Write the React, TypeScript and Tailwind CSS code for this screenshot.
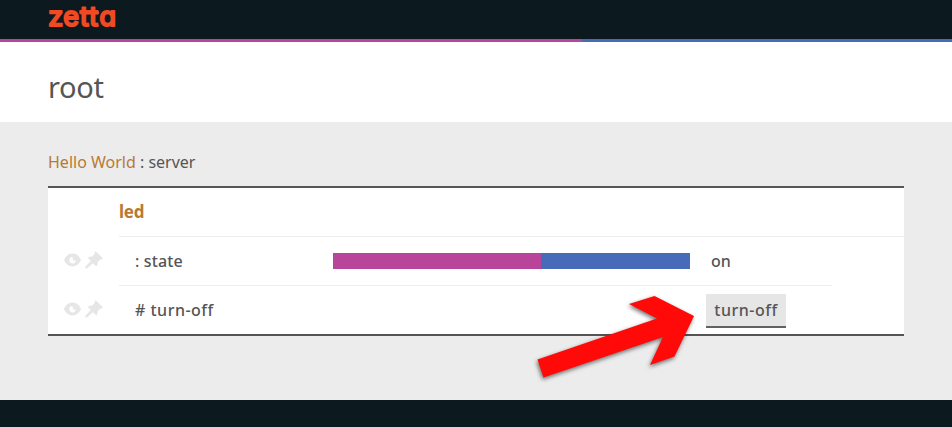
function Eye() {
  return (
    <svg className="block h-[14px] w-[17px]" viewBox="0 0 17 14">
      <path fill="#e6e6e6" fillRule="evenodd" d="M0 7C2 2.6 5 .6 8.500 .6S15 2.600 17 7c-2 4.400-5 6.400-8.500 6.400S2 11.400 0 7ZM8.300 4a3.200 3.200 0 1 0 3.400 3.200L9.400 7.800Z" />
    </svg>
  );
}

function Pin() {
  return (
    <svg className="block h-[18px] w-[18px]" viewBox="0 0 18 18">
      <path
        fill="#e6e6e6"
        stroke="#e6e6e6"
        strokeWidth="0.600"
        strokeLinejoin="round"
        d="M10.900 .8 17.300 7c.3 1.100-.8 1.500-2 1.200l-3 3c.3 1.600 0 2.900-1 3.800L7.900 11.900 2.400 16.800.7 17.200.8 15.700 6.100 10.100 3.100 6.900c1-.9 2.300-1.200 3.900-.9l3-3C9.700 1.800 9.800 .9 10.900 .8Z"
      />
    </svg>
  );
}

function Logo() {
  return (
    <svg className="block h-[39px] w-[80px]" viewBox="0 0 80 39" aria-label="zetta">
      <g fill="#f04923" stroke="#f04923" strokeWidth="2.200" strokeLinejoin="round">
        <text y="26.200" fontSize="27" fontWeight="400" className="font-['Inter',sans-serif] [font-feature-settings:'cv11']">
          <tspan x="0.300">z</tspan>
          <tspan x="15.200">e</tspan>
          <tspan x="32">t</tspan>
          <tspan x="41.300">t</tspan>
          <tspan x="51.400">a</tspan>
        </text>
        <rect x="34" y="12.300" width="16" height="1" />
      </g>
    </svg>
  );
}

function Icons() {
  return (
    <div className="flex w-[71px] shrink-0 gap-1 pl-4 pt-[14px]">
      <div className="pt-[2px]"><Eye /></div>
      <Pin />
    </div>
  );
}

export default function App() {
  return (
    <div className="flex h-[427px] w-[952px] flex-col overflow-hidden bg-[#ececec] font-['Noto_Sans','Open_Sans',sans-serif] text-base text-[#555]">
      <header className="h-[39px] shrink-0 bg-[#0c1a1f] pl-12"><Logo /></header>
      <div className="flex h-[3px] shrink-0">
        <div className="w-[582px] bg-[#b9459b]" />
        <div className="flex-1 bg-[#486bb9]" />
      </div>
      <div className="h-20 shrink-0 bg-white pl-12 pt-[25px]">
        <h1 className="text-[29px] leading-10 tracking-[-0.300px]">root</h1>
      </div>
      <main className="relative h-[278px] shrink-0 px-12 pt-7">
        <div className="h-9 leading-6"><span className="text-[#b87a33]">Hello World</span> : server</div>
        <section className="h-[150px] w-[856px] border-y-2 border-[#555] bg-white">
          <div className="ml-[71px] h-[49px] border-b border-[#eee] text-[17px] font-bold leading-[48px] tracking-[-0.200px] text-[#b87a33]">led</div>
          <div className="flex h-[49px] font-medium">
            <Icons />
            <div className="flex w-[713px] items-center border-b border-[#eee] pl-4">
              <div className="w-[198px] tracking-[0.150px]">: state</div>
              <div className="flex h-4 w-[357px]">
                <div className="w-[208px] bg-[#b9459b]" />
                <div className="flex-1 bg-[#486bb9]" />
              </div>
              <div className="pl-[21px]">on</div>
            </div>
          </div>
          <div className="flex h-12 font-medium">
            <Icons />
            <div className="flex flex-1 items-start pl-4">
              <div className="w-[571px] leading-[48px] tracking-[0.500px]"># turn-off</div>
              <button className="mt-2 h-[34px] w-20 border-b-2 border-[#626262] bg-[#e6e6e6] text-center leading-8 tracking-[0.500px]">turn-off</button>
            </div>
          </div>
        </section>
        <svg className="absolute left-[530px] top-[-112px] h-[390px] w-[180px] [filter:drop-shadow(-1px_2px_2px_rgba(0,0,0,0.550))]" viewBox="530 10 180 390">
          <path fill="#ff0909" d="m629 304 25.500-8L694 316l-19.500 40.500L650 365l13-28L543.500 377.500 537.500 359.500 657 318.500Z" />
        </svg>
      </main>
      <footer className="flex-1 bg-[#0c1a1f]" />
    </div>
  );
}
